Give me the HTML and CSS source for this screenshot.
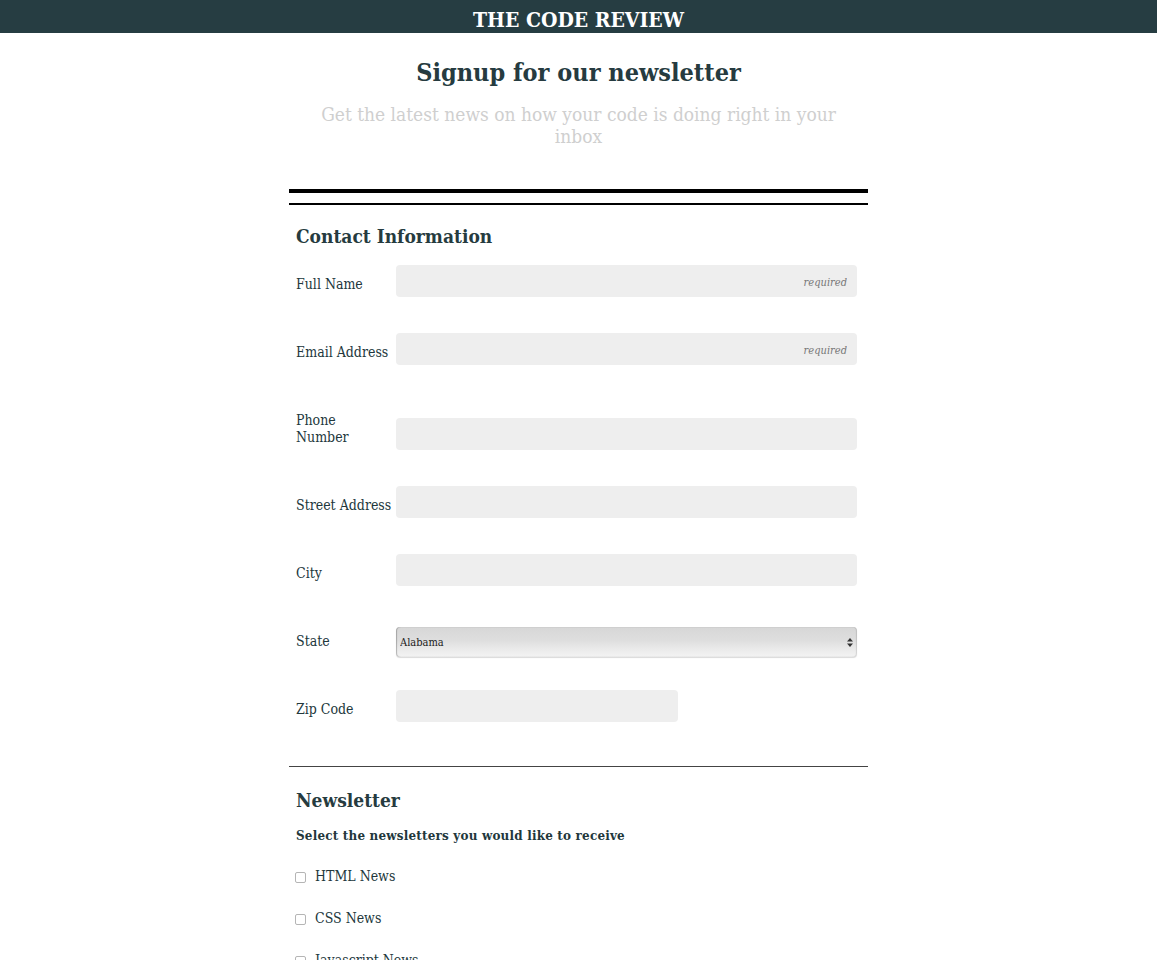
FILE: index.html
```html
<!DOCTYPE html>
<html lang="en">
<head>
<meta charset="utf-8">
<title>The Code Review – Newsletter Signup</title>
<link rel="stylesheet" href="styles.css">
</head>
<body>
<header class="masthead">
  <h1 class="brand">THE CODE REVIEW</h1>
</header>
<main class="page">
  <section class="intro">
    <h2 class="title">Signup for our newsletter</h2>
    <p class="lead">Get the latest news on how your code is doing right in your inbox</p>
  </section>
  <form class="signup">
    <fieldset class="group group-contact">
      <h3 class="group-title">Contact Information</h3>
      <div class="row">
        <label class="row-label" for="name">Full Name</label>
        <input class="field" id="name" type="text" placeholder="required">
      </div>
      <div class="row">
        <label class="row-label" for="email">Email Address</label>
        <input class="field" id="email" type="email" placeholder="required">
      </div>
      <div class="row">
        <label class="row-label" for="phone">Phone<br>Number</label>
        <input class="field" id="phone" type="tel">
      </div>
      <div class="row">
        <label class="row-label" for="street">Street Address</label>
        <input class="field" id="street" type="text">
      </div>
      <div class="row">
        <label class="row-label" for="city">City</label>
        <input class="field" id="city" type="text">
      </div>
      <div class="row">
        <label class="row-label" for="state">State</label>
        <div class="select-wrap">
          <select class="select" id="state">
            <option>Alabama</option>
            <option>Alaska</option>
            <option>Arizona</option>
          </select>
          <svg class="select-arrows" width="6" height="9" viewBox="0 0 6 9" aria-hidden="true">
            <path d="M3 0 L6 3.4 L0 3.4 Z" fill="#333"/>
            <path d="M3 9 L6 5.6 L0 5.6 Z" fill="#333"/>
          </svg>
        </div>
      </div>
      <div class="row">
        <label class="row-label" for="zip">Zip Code</label>
        <input class="field field-short" id="zip" type="text">
      </div>
    </fieldset>
    <fieldset class="group group-news">
      <h3 class="group-title">Newsletter</h3>
      <p class="group-note">Select the newsletters you would like to receive</p>
      <label class="check"><input type="checkbox" class="check-box"> HTML News</label>
      <label class="check"><input type="checkbox" class="check-box"> CSS News</label>
      <label class="check"><input type="checkbox" class="check-box"> Javascript News</label>
    </fieldset>
  </form>
</main>
</body>
</html>
```
FILE: styles.css
```css
* { box-sizing: border-box; }

html, body {
  margin: 0;
  padding: 0;
  background: #fff;
}

body {
  font-family: "DejaVu Serif Condensed", "DejaVu Serif", "Liberation Serif", serif;
  color: #22373c;
}

.masthead {
  background: #263d42;
  height: 33px;
  display: flex;
  justify-content: center;
  align-items: center;
}

.brand {
  margin: 0;
  padding-top: 6px;
  color: #fff;
  font-size: 21px;
  font-weight: bold;
  line-height: 27px;
}

.page {
  width: 579px;
  margin: 0 auto;
}

.intro {
  text-align: center;
  padding: 24px 0 42px;
  border-bottom: 4px solid #000;
}

.title {
  margin: 0;
  font-size: 25px;
  line-height: 32px;
  font-weight: bold;
  color: #263b40;
}

.lead {
  margin: 14px auto 0;
  max-width: 560px;
  font-size: 19px;
  line-height: 22px;
  color: #cfcfcf;
}

.signup { margin: 0; }

.group {
  margin: 0;
  padding: 19px 11px 8px 7px;
  border: 0;
  border-top: 1px solid #000;
  min-width: 0;
}

.group-contact {
  margin-top: 10px;
  border-top-width: 2px;
}

.group-news {
  border-top: 1px solid #444;
  padding-top: 21px;
}

.group-title {
  margin: 0 0 17px;
  font-size: 19px;
  line-height: 24px;
  font-weight: bold;
  color: #263b40;
}

.group-news .group-title { margin-bottom: 15px; }

.row {
  display: flex;
  align-items: flex-end;
  margin-bottom: 36px;
}

.row-label {
  flex: 0 0 100px;
  width: 100px;
  padding: 11px 0 4px;
  font-size: 14px;
  line-height: 17px;
}

.field {
  width: 461px;
  height: 32px;
  border: 0;
  border-radius: 4px;
  background: #eeeeee;
  padding: 0 10px;
  font-family: inherit;
  font-size: 14px;
  color: #333;
  outline: none;
}

.field::placeholder {
  text-align: right;
  font-style: italic;
  font-size: 11px;
  color: #777;
}

.field-short { width: 282px; }

.select-wrap {
  position: relative;
  width: 461px;
  height: 30px;
  margin-bottom: -3px;
}

.select {
  -webkit-appearance: none;
  appearance: none;
  display: block;
  width: 100%;
  height: 30px;
  margin: 0;
  padding: 0 20px 0 4px;
  border: 0;
  border-radius: 4px;
  background: linear-gradient(to bottom, #d7d7d7 0%, #dedede 45%, #e9e9e9 70%, #f3f3f3 100%);
  box-shadow: inset 1px 0 1px rgba(0,0,0,0.25), inset -1px 0 1px rgba(0,0,0,0.12), 0 1px 1px rgba(0,0,0,0.15);
  font-family: "DejaVu Serif Condensed", "DejaVu Serif", serif;
  font-size: 11px;
  color: #222;
  outline: none;
}

.select-arrows {
  position: absolute;
  right: 4px;
  top: 11px;
  pointer-events: none;
}

.group-note {
  margin: 0 0 22px;
  font-size: 13.3px;
  line-height: 18px;
  font-weight: bold;
  letter-spacing: 0.2px;
}

.check {
  display: flex;
  align-items: center;
  gap: 9px;
  font-size: 14px;
  line-height: 18px;
  margin: 0 0 24px -1px;
}

.check-box {
  -webkit-appearance: none;
  appearance: none;
  width: 11px;
  height: 11px;
  margin: 3px 0 0;
  border: 1px solid #b5b5b5;
  border-radius: 2px;
  background: #fff;
  flex: 0 0 auto;
}
```
